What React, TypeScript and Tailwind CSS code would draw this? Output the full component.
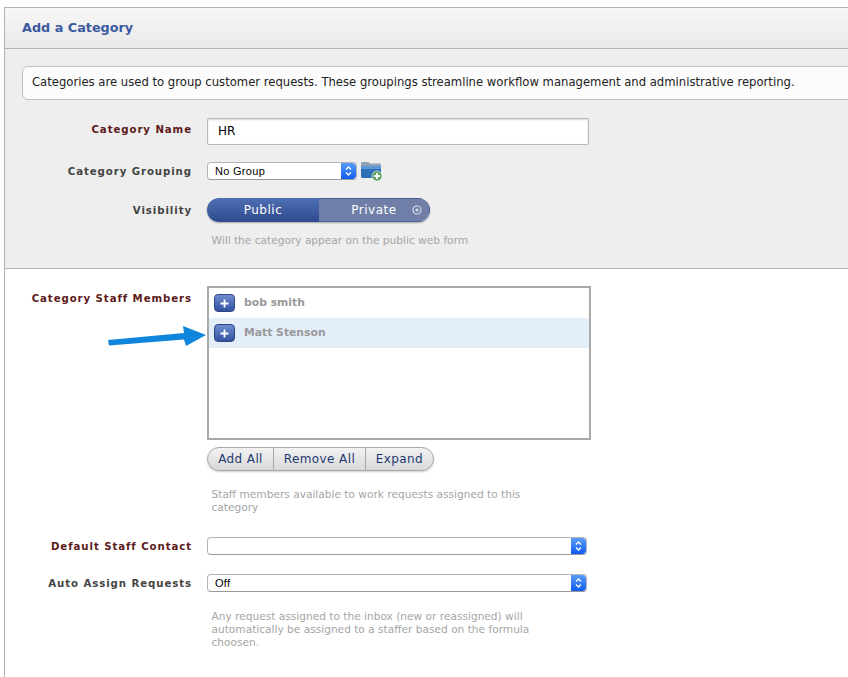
const labelBase = "w-[187px] shrink-0 text-right text-[10.2px] font-bold tracking-[0.92px] font-['DejaVu_Sans',sans-serif]";
const hint = "text-[10.6px] leading-[13px] text-[#a5a5a5] font-['DejaVu_Sans',sans-serif]";

function Stepper() {
  return (
    <div className="flex w-[15px] shrink-0 items-center justify-center self-stretch rounded-r-[4px] bg-gradient-to-b from-[#5a9bf8] to-[#0a5bf0]">
      <svg width="9" height="12" viewBox="0 0 9 12" fill="none" stroke="#fff" strokeWidth="1.3">
        <path d="M2 4.500 4.500 2 7 4.500" />
        <path d="M2 7.500 4.500 10 7 7.500" />
      </svg>
    </div>
  );
}

function Select({ value, className }: { value?: string; className: string }) {
  return (
    <div className={`flex h-[18px] items-center rounded-[4px] border border-[#b5b5b5] border-b-[#999] bg-white pl-[7px] ${className}`}>
      <span className="flex-1 text-[11px] text-black font-['Liberation_Sans',sans-serif] tracking-[0.3px]">{value}</span>
      <Stepper />
    </div>
  );
}

function PlusButton() {
  return (
    <div className="flex h-[18px] w-[21px] items-center justify-center rounded-[4px] border border-[#2f4682] bg-gradient-to-b from-[#6f8cd0] to-[#34529f]">
      <svg width="9" height="9" viewBox="0 0 9 9" stroke="#fff" strokeWidth="1.8">
        <path d="M4.500 0.500v8M0.500 4.500h8" />
      </svg>
    </div>
  );
}

function StaffRow({ name, active }: { name: string; active?: boolean }) {
  return (
    <div className={`flex h-[30px] items-center gap-[9px] pl-[5px] ${active ? "bg-[#e4eef9]" : ""}`}>
      <PlusButton />
      <span className="text-[10.8px] font-bold text-[#999] font-['DejaVu_Sans',sans-serif]">{name}</span>
    </div>
  );
}

function FolderIcon() {
  return (
    <svg width="24" height="22" viewBox="0 0 24 22">
      <path d="M1 3.500C1 2.500 1.600 2 2.500 2h6L10 3.500h9.500c.9 0 1.500.5 1.500 1.500v1H1z" fill="#8f9fb5" />
      <path d="M1 6h20v10.500c0 .8-.6 1.500-1.500 1.500h-17C1.600 18 1 17.300 1 16.500z" fill="#2f6fb8" />
      <path d="M1 6h20v3H1z" fill="#5b97d6" />
      <circle cx="17" cy="16" r="5" fill="#5b9e5f" stroke="#fff" strokeWidth="0.6" />
      <path d="M17 13v6M14 16h6" stroke="#fff" strokeWidth="1.8" />
    </svg>
  );
}

export default function App() {
  return (
    <div className="relative h-[677px] w-[848px] overflow-hidden bg-white pt-[7px] font-['DejaVu_Sans',sans-serif]">
      <div className="ml-[4px] h-[670px] border-l border-t border-[#b3b3b3]">
        {/* header */}
        <div className="flex h-[41px] items-center border-b border-[#b3b3b3] bg-gradient-to-b from-[#f7f7f7] to-[#e9e9e9] pl-[17px]">
          <h1 className="text-[12.8px] font-bold text-[#3b5a9f]">Add a Category</h1>
        </div>

        {/* top form */}
        <div className="h-[220px] border-b border-[#b3b3b3] bg-[#eeeeee] pt-[17px]">
          <div className="ml-[17px] flex h-[34px] w-[840px] items-center rounded-[6px] border border-[#c0c0c0] bg-[#fcfcfc] pl-[9px] text-[11.63px] text-[#222]">
            Categories are used to group customer requests. These groupings streamline workflow management and administrative reporting.
          </div>

          <div className="mt-[18px] flex items-center">
            <div className={`${labelBase} -mt-[3px] text-[#5c1a1a]`}>Category Name</div>
            <div className="ml-[15px] flex h-[27px] w-[382px] items-center rounded-[2px] border border-[#b8b8b8] bg-white pb-[2px] pl-[10px] text-[12px] text-black shadow-[inset_0_1px_2px_rgba(0,0,0,0.15)]">
              HR
            </div>
          </div>

          <div className="mt-[15px] flex items-center">
            <div className={`${labelBase} mt-[2px] text-[#444]`}>Category Grouping</div>
            <Select value="No Group" className="ml-[15px] w-[150px]" />
            <div className="ml-[3px]">
              <FolderIcon />
            </div>
          </div>

          <div className="mt-[16px] flex items-center">
            <div className={`${labelBase} mt-[2px] text-[#444]`}>Visibility</div>
            <div className="ml-[15px] flex h-[24px] w-[223px] overflow-hidden rounded-full text-[12px] tracking-[0.5px] text-white shadow-[0_1px_2px_rgba(0,0,0,0.3)]">
              <div className="flex w-[112px] items-center justify-center bg-gradient-to-b from-[#4f70b5] to-[#2f4a8e]">Public</div>
              <div className="relative flex flex-1 items-center justify-center border border-l-0 border-[#4d6299] bg-[#6f7fa8]">
                Private
                <svg className="absolute right-[7px] top-[6px]" width="10" height="10" viewBox="0 0 10 10" fill="none">
                  <circle cx="5" cy="5" r="4" stroke="#d5dbe8" strokeWidth="1.2" />
                  <circle cx="5" cy="5" r="1.600" fill="#d5dbe8" />
                </svg>
              </div>
            </div>
          </div>

          <p className={`${hint} ml-[206.500px] mt-[12px]`}>Will the category appear on the public web form</p>
        </div>

        {/* staff section */}
        <div className="pt-[17px]">
          <div className="flex items-start">
            <div className={`${labelBase} mt-[5px] text-[#5c1a1a]`}>Category Staff Members</div>
            <div className="ml-[15px] h-[154px] w-[384px] border-2 border-[#a9a9a9]">
              <StaffRow name="bob smith" />
              <StaffRow name="Matt Stenson" active />
            </div>
          </div>

          <div className="ml-[202px] mt-[7px] flex h-[24px] w-[227px] items-center overflow-hidden rounded-full border border-[#a8a8a8] bg-gradient-to-b from-[#f2f2f2] to-[#d9d9d9] text-[12px] tracking-[0.4px] text-[#1f3a73] shadow-[0_1px_2px_rgba(0,0,0,0.2)]">
            <div className="flex h-full w-[66px] items-center justify-center border-r border-[#a8a8a8]">Add All</div>
            <div className="flex h-full w-[92px] items-center justify-center border-r border-[#a8a8a8]">Remove All</div>
            <div className="flex h-full flex-1 items-center justify-center">Expand</div>
          </div>

          <p className={`${hint} ml-[206.500px] mt-[17px] w-[330px]`}>Staff members available to work requests assigned to this category</p>

          <div className="mt-[23px] flex items-center">
            <div className={`${labelBase} mt-[2px] text-[#5c1a1a]`}>Default Staff Contact</div>
            <Select className="ml-[15px] w-[380px]" />
          </div>

          <div className="mt-[19px] flex items-center">
            <div className={`${labelBase} mt-[2px] text-[#444]`}>Auto Assign Requests</div>
            <Select value="Off" className="ml-[15px] w-[380px]" />
          </div>

          <p className={`${hint} ml-[206.500px] mt-[18px] w-[340px]`}>
            Any request assigned to the inbox (new or reassigned) will automatically be assigned to a staffer based on the formula choosen.
          </p>
        </div>
      </div>

      {/* annotation arrow */}
      <svg className="absolute left-[106px] top-[322px]" width="100" height="28" viewBox="0 0 100 28">
        <path d="M3 23.500 78 17.500 80 24 100 13 77 4 78 11 2 18z" fill="#0f86dc" />
      </svg>
    </div>
  );
}
